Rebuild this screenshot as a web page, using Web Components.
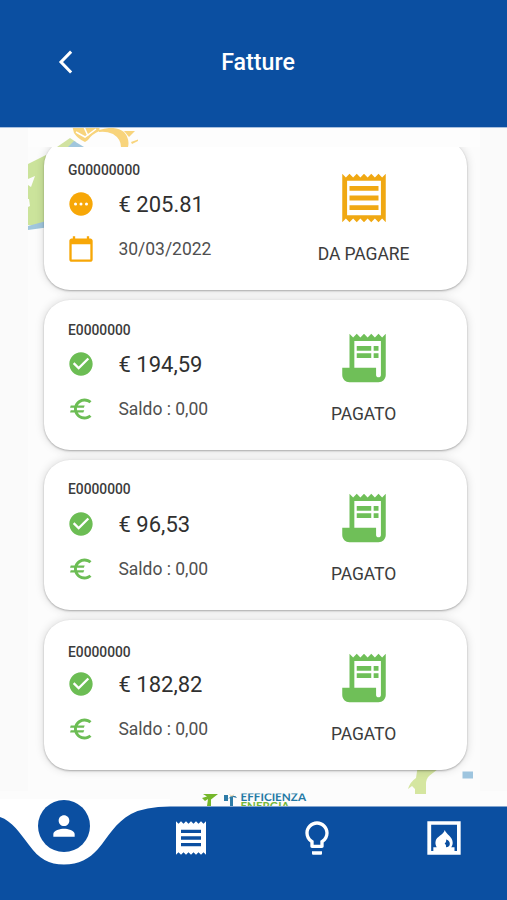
<!DOCTYPE html>
<html lang="it">
<head>
<meta charset="utf-8">
<title>Fatture</title>
<style>
html,body{margin:0;height:100%}
body{font-family:Roboto,"Liberation Sans",sans-serif;color:#3c3c3c;background:#fcfcfc;overflow:hidden}
</style>
</head>
<body>
<app-screen>
  <app-header slot="header">Fatture</app-header>
  <brand-watermark slot="back"></brand-watermark>
  <invoice-card code="G00000000" amount="€ 205.81" state="due" detail="30/03/2022">DA PAGARE</invoice-card>
  <invoice-card code="E0000000" amount="€ 194,59" state="paid" detail="Saldo : 0,00">PAGATO</invoice-card>
  <invoice-card code="E0000000" amount="€ 96,53" state="paid" detail="Saldo : 0,00" style="--id-shift:-1px">PAGATO</invoice-card>
  <invoice-card code="E0000000" amount="€ 182,82" state="paid" detail="Saldo : 0,00" style="--id-shift:2px">PAGATO</invoice-card>
  <app-nav slot="nav"></app-nav>
</app-screen>
<script>
const ZIG_TOP='M19.5 3.5 18 2l-1.5 1.5L15 2l-1.5 1.5L12 2l-1.5 1.5L9 2 7.5 3.5 6 2';
const ZIG=ZIG_TOP+' 4.5 3.5 3 2v20l1.5-1.5L6 22l1.5-1.5L9 22l1.5-1.5L12 22l1.5-1.5L15 22l1.5-1.5L18 22l1.5-1.5L21 22V2l-1.5 1.5z';
const ICONS={
  receiptOutline:`<path d="${ZIG}M19 19.09H5V4.91h14v14.18zM6 15h12v2H6zm0-4h12v2H6zm0-4h12v2H6z"/>`,
  receipt:`<path fill-rule="evenodd" d="${ZIG}M6 15h12v2H6zm0-4h12v2H6zm0-4h12v2H6z"/>`,
  receiptLong:`<path d="${ZIG_TOP}v14H3v3c0 1.66 1.34 3 3 3h12c1.66 0 3-1.34 3-3V2l-1.5 1.5zM19 19c0 .55-.45 1-1 1s-1-.45-1-1v-3H8V5h11v14z"/><path d="M9 7h6v2H9zm7 0h2v2h-2zm-7 3h6v2H9zm7 0h2v2h-2z"/>`,
  pending:'<path d="M12 2C6.48 2 2 6.48 2 12s4.48 10 10 10 10-4.48 10-10S17.52 2 12 2z"/><g fill="#fff"><circle cx="7.3" cy="12" r="1.3"/><circle cx="12" cy="12" r="1.3"/><circle cx="16.7" cy="12" r="1.3"/></g>',
  check:'<path d="M12 2C6.48 2 2 6.48 2 12s4.48 10 10 10 10-4.48 10-10S17.52 2 12 2zm-2 15-5-5 1.41-1.41L10 14.17l7.59-7.59L19 8l-9 9z"/>',
  calendar:'<path d="M20 3h-1V1h-2v2H7V1H5v2H4c-1.1 0-2 .9-2 2v16c0 1.1.9 2 2 2h16c1.1 0 2-.9 2-2V5c0-1.1-.9-2-2-2zm0 18H4V8h16v13z"/>',
  euro:'<path d="M15 18.5c-2.51 0-4.68-1.42-5.76-3.5H14l.8-2H8.58c-.05-.33-.08-.66-.08-1s.03-.67.08-1H14.4l.8-2H9.24C10.32 6.92 12.5 5.5 15 5.5c1.61 0 3.09.59 4.23 1.57L21 5.3C19.41 3.87 17.3 3 15 3c-3.92 0-7.24 2.51-8.48 6H3.2l-.6 2h3.46c-.04.33-.06.66-.06 1s.02.67.06 1H3.2l-.6 2h3.92c1.24 3.49 4.56 6 8.48 6 2.31 0 4.41-.87 6-2.3l-1.78-1.77c-1.13.98-2.6 1.57-4.22 1.57z"/>',
  bulb:'<path d="M9 20h6v1.4q0 .6-.6.6H9.6q-.6 0-.6-.6zm3-18C8.14 2 5 5.14 5 9c0 2.38 1.19 4.47 3 5.74V17c0 .55.45 1 1 1h6c.55 0 1-.45 1-1v-2.26c1.81-1.27 3-3.36 3-5.74 0-3.86-3.14-7-7-7zm2.85 11.1-.85.6V16h-4v-2.3l-.85-.6C7.8 12.16 7 10.63 7 9c0-2.76 2.24-5 5-5s5 2.24 5 5c0 1.63-.8 3.16-2.15 4.1z"/>',
  fireplace:'<path fill-rule="evenodd" d="M2 2h20v20H2zM4.3 4.1v15.7h1.3v-2.300h2C6.900 16.400 6.600 15 7.100 13.400 7.800 11 11.500 10.300 12.500 7.200 13.100 9.500 17.100 11.300 17.200 14.500c.1 1.200-.3 2.200-.9 3h2v2.300h1.500V4.100z"/><path fill="#0b4fa1" d="M13.2 12.900c.4 1.200-.2 1.800-.8 2.400.6.600 1 1 .8 2.300 1.500-.1 2.300-1 2.300-2.200s-.9-2.200-2.300-2.500z"/>',
  person:'<path d="M12 12c2.21 0 4-1.79 4-4s-1.79-4-4-4-4 1.79-4 4 1.79 4 4 4zm0 2c-2.67 0-8 1.34-8 4v2h16v-2c0-2.66-5.33-4-8-4z"/>',
  back:'<path d="M17 3.2 8 12.500l9 9.300" fill="none" stroke="currentColor" stroke-width="2.7"/>'
};
const element=(tag,render)=>customElements.define(tag,class extends HTMLElement{
  connectedCallback(){
    if(!this.shadowRoot) this.attachShadow({mode:'open'}).innerHTML=render(this);
  }
});

element('ui-icon',el=>`<style>:host{display:block;width:var(--size,24px);height:var(--size,24px)}svg{display:block;width:100%;height:100%;fill:currentColor}</style>
<svg viewBox="0 0 24 24">${ICONS[el.getAttribute('name')]}</svg>`);

element('app-header',()=>`<style>
:host{display:grid;grid-template-columns:130px 1fr 121px;align-items:center;height:128px;box-sizing:border-box;padding-bottom:4px;background:#0b4fa1;color:#fff;border-bottom:1px solid #a9c0de}
ui-icon{--size:27px;margin-left:52px}
h1{margin:0;text-align:center;font-size:23.2px;font-weight:500;line-height:30px}
</style><ui-icon name="back"></ui-icon><h1><slot></slot></h1>`);

element('invoice-card',el=>{
  const paid=el.getAttribute('state')==='paid';
  return `<style>
:host{display:grid;grid-template-columns:1fr 207px;height:150px;box-sizing:border-box;background:#fff;border-radius:26px;box-shadow:0 1px 2px rgba(0,0,0,.28),0 0 10px rgba(0,0,0,.15)}
.info{display:grid;grid-template-columns:50px 1fr;grid-template-rows:16px 52px 38px;align-content:start;align-items:center;padding:22.5px 0 0 24px}
.code{grid-column:1/-1;font-size:13.8px;font-weight:500;line-height:16px;transform:translateY(var(--id-shift,0px))}
.amount{font-size:22px;line-height:28px;color:#303030;margin:2px 0 0 .5px}
.detail{font-size:17.5px;line-height:24px;color:#505050;letter-spacing:-.03px;margin-left:.5px}
ui-icon{--size:28px;color:var(--tone)}
.info ui-icon{margin-left:-1px}
.info{--tone:${paid?'#6cbd54':'#f7a707'}}
.state{--tone:${paid?'#6fbf58':'#f0a812'};display:flex;flex-direction:column;align-items:center;padding-top:29px;gap:15px;font-size:17.5px;letter-spacing:-.08px;line-height:24px}
.state ui-icon{--size:58px}
</style>
<div class="info">
<div class="code">${el.getAttribute('code')}</div>
<ui-icon name="${paid?'check':'pending'}"></ui-icon><div class="amount">${el.getAttribute('amount')}</div>
<ui-icon name="${paid?'euro':'calendar'}"></ui-icon><div class="detail">${el.getAttribute('detail')}</div>
</div>
<div class="state"><ui-icon name="${paid?'receiptLong':'receiptOutline'}"></ui-icon><span><slot></slot></span></div>`;
});

element('brand-watermark',()=>`<style>:host{display:block}svg{display:block}text{font-family:Lato,"Liberation Sans",sans-serif;font-weight:700}</style>
<svg width="507" height="679" viewBox="0 127 507 679">
<defs><clipPath id="strip"><path d="M200 793.500H310V806H200z"/></clipPath></defs>
<path fill="#fafafa" d="M0 127H28V791H0zM480 127H507V791H480z"/>
<path fill="#fff" d="M28 127H480V147H28z" opacity=".4"/>
<g fill="#f8d47c"><path d="M72.500 127H99.500V131Q92 134 88 140L85 142Q78 139 74 133z"/>
<path d="M99 130Q115 125 124 132Q130 139 128 147H121Q121 139 113 134Q106 131 99 132z"/><path d="M124 131H135L129 137z"/><path d="M131 142L138 139.500V141L132 144z"/></g>
<path d="M76 132L85 137L96 129M84 127L88 136" fill="none" stroke="#fff" stroke-width="1.500"/>
<path fill="#d1e2a0" d="M57 147L70 138L76 142L70 147z"/><path fill="#a0c6dd" d="M68 147L74 141L84 147z"/>
<path fill="#cbe39b" d="M28 164L46 155V227L28 225V207L30 206L29 199L28 199V185L31 187L35 176L28 179z"/>
<path fill="#a0c6dd" d="M28 226L50 220V227L28 230z"/>
<path fill="#d5e6a0" d="M418 765L438 769L429 776Q426 779 426 784V794H415V789L412 786L408 789Q410 782 416 778z"/>
<path fill="#9ec5df" d="M462.500 771.500H473V778.500H462.500z"/>
<g clip-path="url(#strip)">
<path fill="#75b72b" d="M203 794H218L211 799.500V806H207L208 799L205 801L202 798L207 796.500z"/>
<path fill="#2d7ba7" d="M224 795H228V801H224zM231 796Q236 795 237 798L233 797V806H230V798L228 799z"/><path fill="#e5bd74" d="M228 793L232 796L235 793L232 797z"/>
<text x="240.500" y="801.200" font-size="11.500" textLength="65.500" lengthAdjust="spacingAndGlyphs" fill="#2479a5">EFFICIENZA</text>
<text x="240.500" y="809.700" font-size="10.500" textLength="49" lengthAdjust="spacingAndGlyphs" fill="#75b739">ENERGIA</text>
</g>
</svg>`);

element('app-nav',()=>`<style>
:host{display:block;position:relative;height:108px}
.wave{position:absolute;inset:0;display:block}
nav{position:relative;display:grid;grid-template-columns:127px 127px 126px 127px;justify-items:center;color:#fff}
ui-icon{--size:40px;margin-top:26px}
.active{width:52px;height:52px;border-radius:50%;background:#0b4fa1;display:grid;place-items:center;margin-top:7.5px}
.active ui-icon{--size:32px;margin:0}
</style>
<svg class="wave" width="507" height="108" viewBox="0 792 507 108"><path fill="#fff" d="M0 799H170V870H0z"/><path fill="#0b4fa1" d="M0 817C12 821 20 833 29 845C39 859 49 864.500 64 864.500C79 864.500 89 859 98 849C109 836 115 823 131 814Q145 806.500 170 806.500H507V900H0z"/></svg>
<nav><div class="active"><ui-icon name="person"></ui-icon></div><ui-icon name="receipt"></ui-icon><ui-icon name="bulb"></ui-icon><ui-icon name="fireplace"></ui-icon></nav>`);

element('app-screen',()=>`<style>
:host{display:grid;grid-template-rows:128px 664px 108px;width:507px;height:900px;overflow:hidden}
main{position:relative;padding-top:19px;box-sizing:border-box}
.back{position:absolute;left:0;top:-1px;clip-path:inset(1px 0 0 0)}
.list{position:relative;height:645px;overflow:hidden}
.cards{display:flex;flex-direction:column;gap:10px;padding:0 40px 0 44px;margin-top:-7.500px}
</style>
<slot name="header"></slot>
<main><div class="back"><slot name="back"></slot></div><div class="list"><div class="cards"><slot></slot></div></div></main>
<slot name="nav"></slot>`);
</script>
</body>
</html>
